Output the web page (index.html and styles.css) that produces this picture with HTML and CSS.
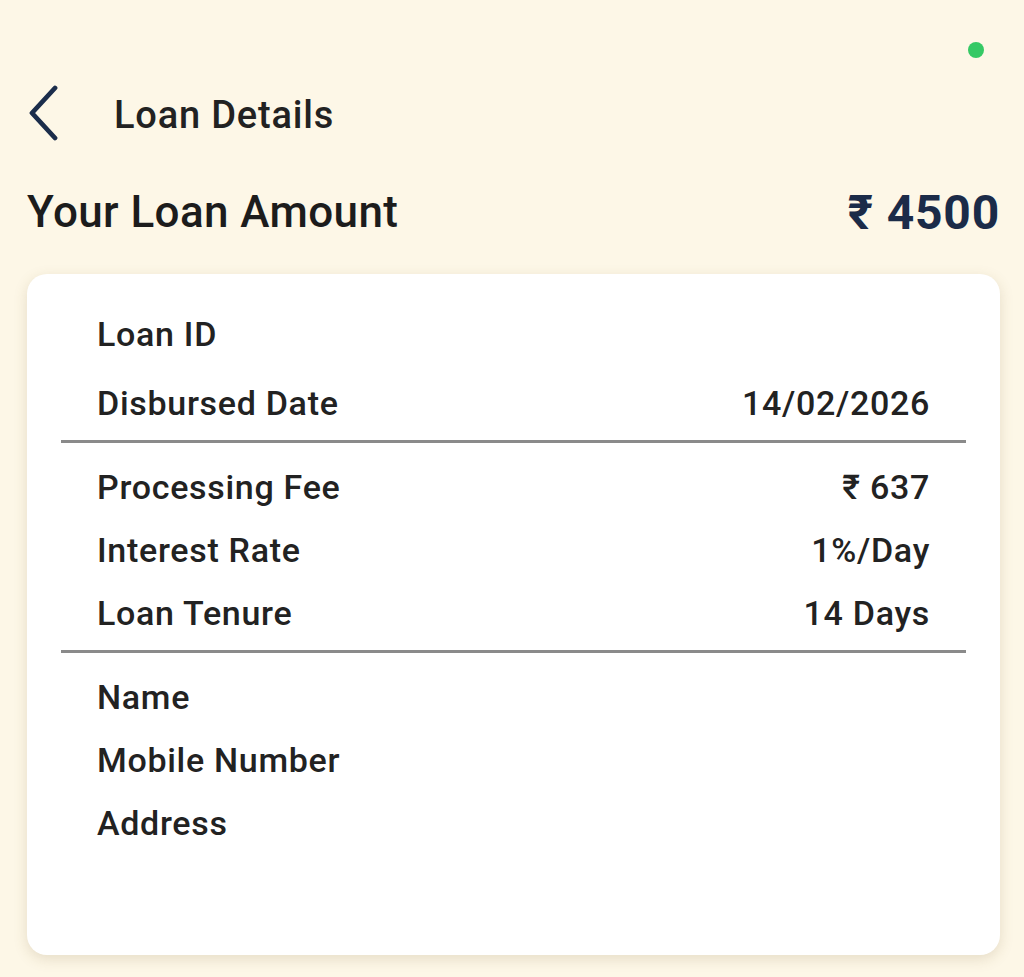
FILE: index.html
```html
<!DOCTYPE html>
<html>
<head>
<meta charset="utf-8">
<link rel="stylesheet" href="styles.css">
</head>
<body>
<div class="screen">
  <div class="status"><span class="dot"></span></div>
  <div class="topbar">
    <svg class="back" width="40" height="60" viewBox="0 0 40 60"><path d="M31 3 L8 28 L31 53" fill="none" stroke="#1b2d4b" stroke-width="4.8" stroke-linecap="round" stroke-linejoin="round"/></svg>
    <span class="title">Loan Details</span>
  </div>
  <div class="amount-row">
    <span class="amount-label">Your Loan Amount</span>
    <span class="amount-value">₹ 4500</span>
  </div>
  <div class="card">
    <div class="group first">
      <div class="row"><span>Loan ID</span><span></span></div>
      <div class="row"><span>Disbursed Date</span><span>14/02/2026</span></div>
    </div>
    <div class="divider"></div>
    <div class="group">
      <div class="row"><span>Processing Fee</span><span>₹ 637</span></div>
      <div class="row"><span>Interest Rate</span><span>1%/Day</span></div>
      <div class="row"><span>Loan Tenure</span><span>14 Days</span></div>
    </div>
    <div class="divider"></div>
    <div class="group">
      <div class="row"><span>Name</span><span></span></div>
      <div class="row"><span>Mobile Number</span><span></span></div>
      <div class="row"><span>Address</span><span></span></div>
    </div>
  </div>
</div>
</body>
</html>
```
FILE: styles.css
```css
html, body {
  margin: 0;
  padding: 0;
  background: #fdf7e7;
}
body {
  font-family: Roboto, "Liberation Sans", sans-serif;
  color: #1d1d1d;
  width: 1024px;
  height: 977px;
  overflow: hidden;
}
.screen {
  padding: 0 24px 0 27px;
}
.status {
  height: 42px;
  display: flex;
  justify-content: flex-end;
  align-items: flex-end;
  padding-right: 16px;
}
.dot {
  width: 16px;
  height: 16px;
  border-radius: 50%;
  background: #35c965;
  margin-bottom: -16px;
}
.topbar {
  display: flex;
  align-items: center;
  height: 60px;
  margin-top: 43px;
}
.back {
  display: block;
  margin-left: -3px;
}
.title {
  margin-left: 50px;
  font-size: 38px;
  font-weight: 500;
  color: #222;
  letter-spacing: 0.8px;
}
.amount-row {
  display: flex;
  justify-content: space-between;
  align-items: center;
  margin-top: 37px;
  height: 60px;
}
.amount-label {
  font-size: 44px;
  font-weight: 500;
  color: #1c1c1c;
  letter-spacing: 0.4px;
}
.amount-value {
  font-size: 48px;
  font-weight: 700;
  color: #1b2b48;
  letter-spacing: 0.8px;
}
.card {
  margin-top: 32px;
  width: 973px;
  height: 681px;
  box-sizing: border-box;
  background: #fff;
  border-radius: 20px;
  box-shadow: 0 4px 14px rgba(120, 100, 50, 0.18);
  padding: 28px 34px 0 34px;
}
.group {
  padding: 0 36px;
  display: flex;
  flex-direction: column;
}
.group.first {
  gap: 6px;
}
.row {
  display: flex;
  justify-content: space-between;
  align-items: center;
  height: 63px;
  font-size: 34px;
  font-weight: 500;
  color: #222;
  letter-spacing: 0.7px;
}
.divider {
  height: 3px;
  background: #8a8a8a;
  margin: 6px 0 12px;
}
```
